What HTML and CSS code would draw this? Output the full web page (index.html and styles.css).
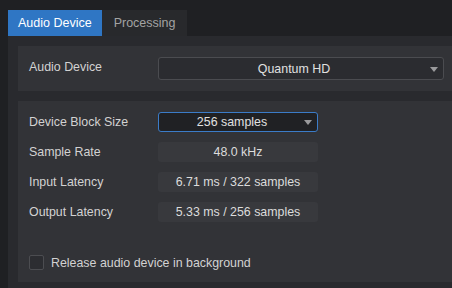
FILE: index.html
```html
<!DOCTYPE html>
<html lang="en">
<head>
    <meta charset="UTF-8">
    <title>Audio Setup</title>
    <link rel="stylesheet" href="styles.css">
</head>
<body>
    <div class="tabs">
        <div class="tab active">Audio Device</div>
        <div class="tab">Processing</div>
    </div>
    <div class="panel">
        <div class="group top-group">
            <div class="row">
                <span class="label raised">Audio Device</span>
                <div class="combo wide">Quantum HD<span class="arrow"></span></div>
            </div>
        </div>
        <div class="group main-group">
            <div class="row">
                <span class="label">Device Block Size</span>
                <div class="combo focused">256 samples<span class="arrow"></span></div>
            </div>
            <div class="row">
                <span class="label">Sample Rate</span>
                <div class="field">48.0 kHz</div>
            </div>
            <div class="row">
                <span class="label">Input Latency</span>
                <div class="field">6.71 ms / 322 samples</div>
            </div>
            <div class="row">
                <span class="label">Output Latency</span>
                <div class="field">5.33 ms / 256 samples</div>
            </div>
            <label class="check-row">
                <span class="checkbox"></span>
                Release audio device in background
            </label>
        </div>
    </div>
</body>
</html>
```
FILE: styles.css
```css
html, body {
    height: 100%;
}
body {
    margin: 0;
    background-color: #1f2023;
    font-family: "Liberation Sans", Arial, sans-serif;
    font-size: 12.4px;
    color: #d2d2d2;
    overflow: hidden;
}
.tabs {
    display: flex;
    padding: 10px 0 0 8px;
}
.tab {
    height: 26px;
    line-height: 26px;
    padding: 0 11px 0 12px;
    background-color: #28292c;
    color: #a3a3a3;
    font-size: 12.5px;
}
.tab.active {
    background-color: #2f76c4;
    color: #ffffff;
    padding: 0 10px;
}
.panel {
    margin-left: 8px;
    height: 252px;
    background-color: #292a2e;
    padding: 10px 0 0 10px;
    box-sizing: border-box;
}
.group {
    background-color: #323337;
    padding-left: 11px;
}
.top-group {
    height: 45px;
    display: flex;
    align-items: center;
}
.main-group {
    margin-top: 10px;
    height: 181px;
    padding-top: 11px;
    box-sizing: border-box;
    display: flex;
    flex-direction: column;
    gap: 10px;
}
.row {
    display: flex;
    align-items: center;
}
.label {
    width: 129px;
    flex-shrink: 0;
}
.label.raised {
    margin-bottom: 3px;
}
.combo {
    position: relative;
    width: 160px;
    height: 20px;
    line-height: 19px;
    text-align: center;
    padding-right: 12px;
    background-color: #202124;
    border: 1px solid #45464a;
    border-radius: 3px;
    box-sizing: border-box;
    color: #e0e0e0;
}
.combo.wide {
    width: 286px;
    height: 23px;
    line-height: 22px;
    padding-right: 14px;
    background-color: #2b2c30;
    border-color: #4b4c50;
}
.combo.focused {
    border-color: #3b7cc8;
}
.arrow {
    position: absolute;
    right: 5px;
    top: 50%;
    margin-top: -2px;
    width: 0;
    height: 0;
    border-left: 4px solid transparent;
    border-right: 4px solid transparent;
    border-top: 5px solid #9a9a9c;
}
.field {
    width: 160px;
    height: 20px;
    line-height: 20px;
    text-align: center;
    background-color: #38393d;
    border-radius: 3px;
    color: #dcdcdc;
}
.check-row {
    display: flex;
    align-items: center;
    gap: 7px;
    margin-top: 23px;
}
.checkbox {
    width: 15px;
    height: 15px;
    border: 1px solid #4c4d51;
    border-radius: 2px;
    background-color: #2c2d31;
    box-sizing: border-box;
}
```
